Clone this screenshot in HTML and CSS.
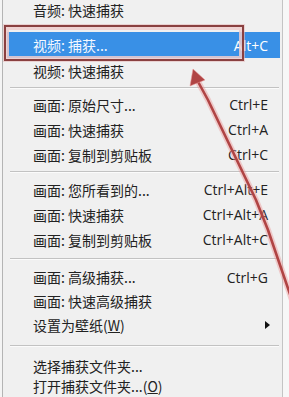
FILE: index.html
```html
<!DOCTYPE html>
<html lang="zh">
<head>
<meta charset="utf-8">
<link rel="stylesheet" href="styles.css">
</head>
<body>
<div class="screen">
  <div class="edge-left"></div>
  <div class="menu">
    <div class="item h20"><span class="label">音频: 快速捕获</span></div>
    <div class="gap12"></div>
    <div class="item active h26"><span class="label">视频: 捕获...</span><span class="key">Alt+C</span></div>
    <div class="item"><span class="label">视频: 快速捕获</span></div>
    <div class="sep s9"></div>
    <div class="item"><span class="label">画面: 原始尺寸...</span><span class="key">Ctrl+E</span></div>
    <div class="item"><span class="label">画面: 快速捕获</span><span class="key">Ctrl+A</span></div>
    <div class="item"><span class="label">画面: 复制到剪贴板</span><span class="key">Ctrl+C</span></div>
    <div class="sep s10"></div>
    <div class="item"><span class="label">画面: 您所看到的...</span><span class="key">Ctrl+Alt+E</span></div>
    <div class="item"><span class="label">画面: 快速捕获</span><span class="key">Ctrl+Alt+A</span></div>
    <div class="item"><span class="label">画面: 复制到剪贴板</span><span class="key">Ctrl+Alt+C</span></div>
    <div class="sep s13"></div>
    <div class="item h24"><span class="label">画面: 高级捕获...</span><span class="key">Ctrl+G</span></div>
    <div class="item h23"><span class="label">画面: 快速高级捕获</span></div>
    <div class="item"><span class="label">设置为壁纸(<u>W</u>)</span><span class="sub"></span></div>
    <div class="sep s18"></div>
    <div class="item h21"><span class="label">选择捕获文件夹...</span></div>
    <div class="item h20"><span class="label">打开捕获文件夹...(<u>O</u>)</span></div>
  </div>
  <div class="edge-right"></div>

  <div class="mark"></div>
  <svg class="arrow" width="289" height="397" viewBox="0 0 289 397">
    <path d="M196 78 L208 100 L232 150 L256 200 L268 230 L292 300" fill="none" stroke="rgba(235,150,150,0.45)" stroke-width="6" stroke-linecap="round" stroke-linejoin="round"/>
    <path d="M196 78 L208 100 L232 150 L256 200 L268 230 L292 300" fill="none" stroke="#b04444" stroke-width="2.6" stroke-linejoin="round"/>
    <polygon points="193,69 190,86 205,80" fill="#b04444" stroke="rgba(235,150,150,0.5)" stroke-width="1"/>
  </svg>
</div>
</body>
</html>
```
FILE: styles.css
```css
html, body {
  margin: 0;
  padding: 0;
  background: #f0f0f0;
}
.screen {
  position: relative;
  width: 289px;
  height: 397px;
  overflow: hidden;
  display: flex;
  font-family: "Noto Sans CJK SC", "Noto Sans", sans-serif;
  font-size: 14px;
  color: #222222;
}
.edge-left {
  width: 2px;
  background: #f4f4f4;
}
.edge-right {
  width: 6px;
  background: #f7f7f7;
}
.menu {
  flex: 1;
  background: #f0f0f0;
  border-left: 1px solid #b4b4b4;
  border-right: 1px solid #c4c4c4;
  display: flex;
  flex-direction: column;
}
.item {
  height: 25px;
  margin: 0 2px 0 4px;
  padding: 0 12px 0 26px;
  display: flex;
  align-items: center;
  justify-content: space-between;
  white-space: nowrap;
  flex-shrink: 0;
}
.h20 { height: 20px; }
.h21 { height: 21px; }
.h23 { height: 23px; }
.h24 { height: 24px; }
.h26 { height: 26px; }
.gap12 { height: 12px; flex-shrink: 0; }
.label u { text-decoration: underline; text-underline-offset: 1px; }
.key {
  font-family: "Open Sans", "Noto Sans", sans-serif;
  font-size: 14px;
}
.active {
  background: #3990e6;
  color: #ffffff;
}
.active .label { color: #f4f8ff; }
.sub {
  width: 0;
  height: 0;
  border-top: 4px solid transparent;
  border-bottom: 4px solid transparent;
  border-left: 5px solid #111;
  margin-right: -2px;
}
.sep {
  flex-shrink: 0;
  display: flex;
  flex-direction: column;
  justify-content: center;
  padding-left: 7px;
  padding-right: 3px;
}
.sep::before {
  content: "";
  display: block;
  border-top: 1px solid #c2c2c2;
  border-bottom: 1px solid #fbfbfb;
}
.s9 { height: 9px; }
.s10 { height: 10px; }
.s13 { height: 13px; }
.s18 { height: 18px; }
.mark {
  position: absolute;
  left: 4px;
  top: 25px;
  width: 236px;
  height: 32px;
  border: 2px solid #8a4040;
  box-shadow: inset 0 0 0 3px rgba(238, 205, 205, 0.85), 0 0 0 1px rgba(230, 190, 190, 0.6);
}
.arrow {
  position: absolute;
  left: 0;
  top: 0;
  pointer-events: none;
}
```
